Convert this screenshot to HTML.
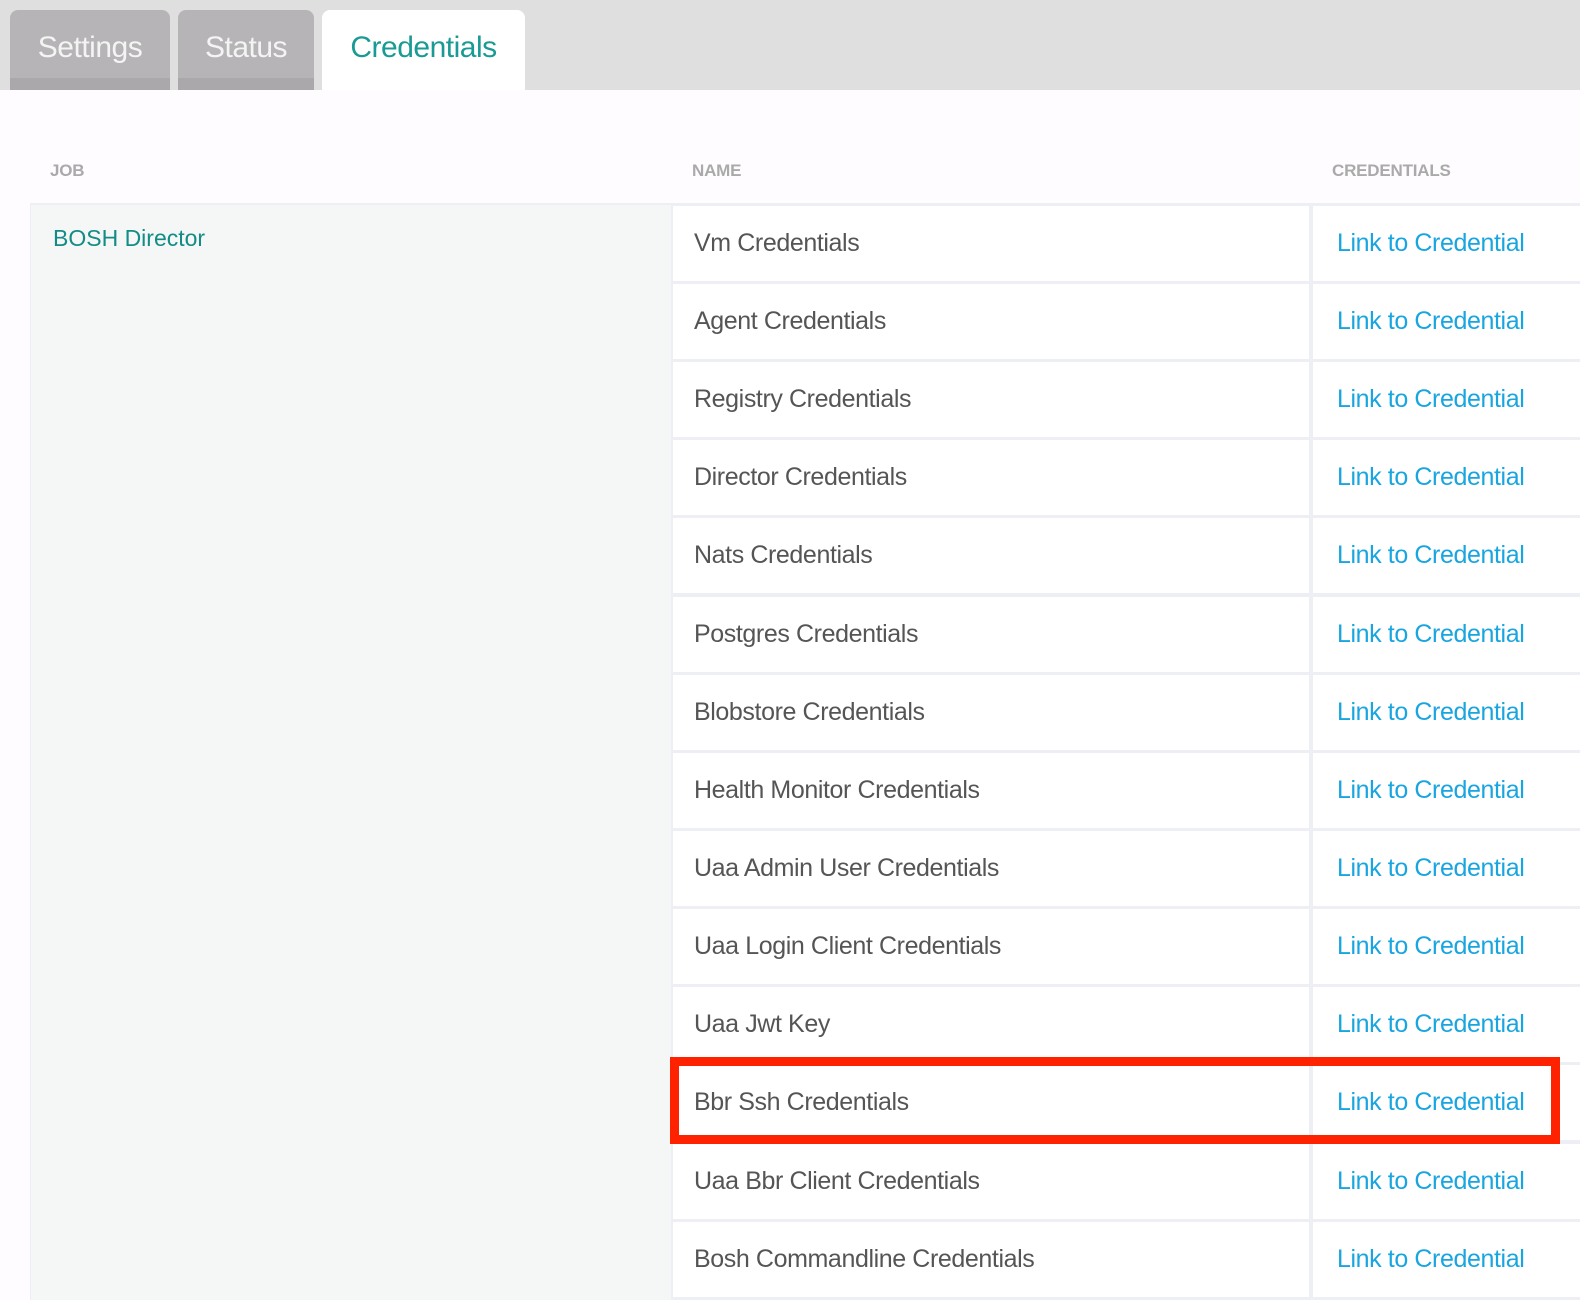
<!DOCTYPE html>
<html><head><meta charset="utf-8"><style>
*{margin:0;padding:0;box-sizing:border-box}
html,body{width:1580px;height:1300px;overflow:hidden}
body{background:#fefcfe;font-family:"Liberation Sans",sans-serif;position:relative}
.bar{position:absolute;left:0;top:0;width:1580px;height:90px;background:#dfdfdf}
.tab{position:absolute;top:10px;height:80px;border-radius:8px 8px 0 0;font-size:30px;color:#f4f4f4;line-height:76px;text-align:center;letter-spacing:-0.5px}
.tab.g{background:linear-gradient(#b6b4b6 0,#b6b4b6 85%,#aaa8aa 85%)}
.tab.a{background:#fff;color:#1a9a94}
.hd{position:absolute;top:161px;font-size:17px;color:#aaa;font-weight:bold;letter-spacing:-0.2px}
.grid{position:absolute;left:30px;top:203px;width:1550px;height:1097px;background:#eeeef5}
.job{position:absolute;left:31px;top:205px;width:640px;height:1095px;background:#f5f6f6}
.job span{position:absolute;left:22px;top:20px;font-size:23px;color:#138c86}
.c{position:absolute;height:75px;background:#fff;font-size:25px;line-height:75px;letter-spacing:-0.4px}
.n{left:673px;width:636px;color:#555;padding-left:21px}
.l{left:1313px;width:267px;color:#19a5df;padding-left:24px}
.red{position:absolute;left:670px;top:1057px;width:890px;height:87px;border:9px solid #ff2200}
</style></head><body>
<div class="bar"></div>
<div class="tab g" style="left:10px;width:160px">Settings</div>
<div class="tab g" style="left:178px;width:136px">Status</div>
<div class="tab a" style="left:322px;width:203px">Credentials</div>
<div class="hd" style="left:50px">JOB</div>
<div class="hd" style="left:692px">NAME</div>
<div class="hd" style="left:1332px">CREDENTIALS</div>
<div class="grid"></div>
<div class="job"><span>BOSH Director</span></div>
<div class="c n" style="top:206px">Vm Credentials</div><div class="c l" style="top:206px">Link to Credential</div>
<div class="c n" style="top:284px">Agent Credentials</div><div class="c l" style="top:284px">Link to Credential</div>
<div class="c n" style="top:362px">Registry Credentials</div><div class="c l" style="top:362px">Link to Credential</div>
<div class="c n" style="top:440px">Director Credentials</div><div class="c l" style="top:440px">Link to Credential</div>
<div class="c n" style="top:518px">Nats Credentials</div><div class="c l" style="top:518px">Link to Credential</div>
<div class="c n" style="top:597px">Postgres Credentials</div><div class="c l" style="top:597px">Link to Credential</div>
<div class="c n" style="top:675px">Blobstore Credentials</div><div class="c l" style="top:675px">Link to Credential</div>
<div class="c n" style="top:753px">Health Monitor Credentials</div><div class="c l" style="top:753px">Link to Credential</div>
<div class="c n" style="top:831px">Uaa Admin User Credentials</div><div class="c l" style="top:831px">Link to Credential</div>
<div class="c n" style="top:909px">Uaa Login Client Credentials</div><div class="c l" style="top:909px">Link to Credential</div>
<div class="c n" style="top:987px">Uaa Jwt Key</div><div class="c l" style="top:987px">Link to Credential</div>
<div class="c n" style="top:1065px">Bbr Ssh Credentials</div><div class="c l" style="top:1065px">Link to Credential</div>
<div class="c n" style="top:1144px">Uaa Bbr Client Credentials</div><div class="c l" style="top:1144px">Link to Credential</div>
<div class="c n" style="top:1222px">Bosh Commandline Credentials</div><div class="c l" style="top:1222px">Link to Credential</div>
<div class="red"></div>
</body></html>
